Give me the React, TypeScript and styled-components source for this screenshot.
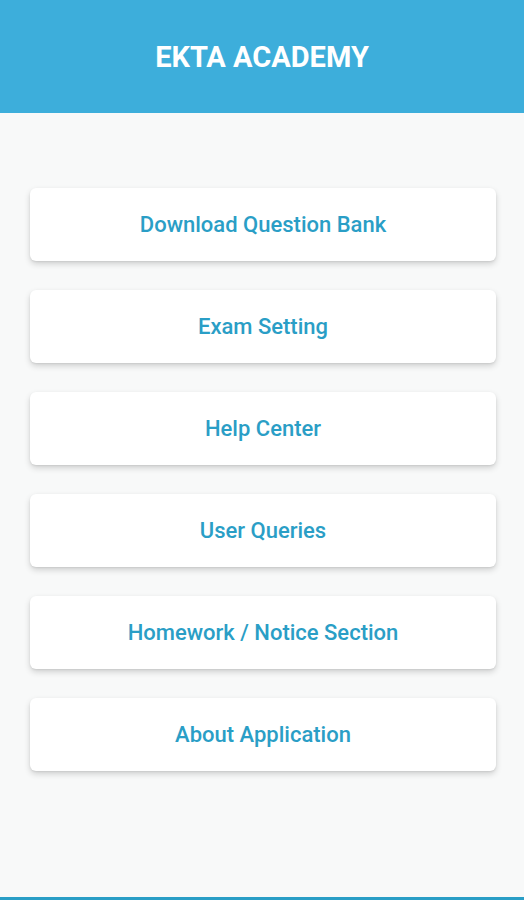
import React from "react";
import styled, { createGlobalStyle } from "styled-components";

const GlobalStyle = createGlobalStyle`
    html, body {
        margin: 0;
        padding: 0;
        background: #f8f9f9;
        font-family: Roboto, "Liberation Sans", sans-serif;
    }
`;

const menuItems = [
    "Download Question Bank",
    "Exam Setting",
    "Help Center",
    "User Queries",
    "Homework / Notice Section",
    "About Application",
];

const App: React.FC = () => {
    return (
        <>
            <GlobalStyle />
            <Screen>
                <Header>
                    <Title>EKTA ACADEMY</Title>
                </Header>
                <Menu>
                    {menuItems.map(label => (
                        <MenuCard key={label}>{label}</MenuCard>
                    ))}
                </Menu>
                <BottomBar />
            </Screen>
        </>
    );
};

export default App;

const Screen = styled.div`
    display: flex;
    flex-direction: column;
    width: 524px;
    height: 900px;
    background: #f8f9f9;
`;

const Header = styled.header`
    display: flex;
    align-items: center;
    justify-content: center;
    height: 113px;
    background: #3daedb;
    flex-shrink: 0;
`;

const Title = styled.h1`
    margin: 0;
    color: #ffffff;
    font-size: 29px;
    font-weight: 700;
`;

const Menu = styled.div`
    flex: 1;
    display: flex;
    flex-direction: column;
    gap: 29px;
    padding: 75px 28px 0 30px;
`;

const MenuCard = styled.button`
    display: flex;
    align-items: center;
    justify-content: center;
    height: 73px;
    border: none;
    border-radius: 6px;
    background: #ffffff;
    box-shadow: 0 3px 6px rgba(0, 0, 0, 0.16), 0 1px 2px rgba(0, 0, 0, 0.08);
    color: #2a9ec6;
    font-family: Roboto, "Liberation Sans", sans-serif;
    font-size: 22px;
    font-weight: 500;
    cursor: pointer;
`;

const BottomBar = styled.div`
    height: 3px;
    background: #2a9ec6;
    flex-shrink: 0;
`;
